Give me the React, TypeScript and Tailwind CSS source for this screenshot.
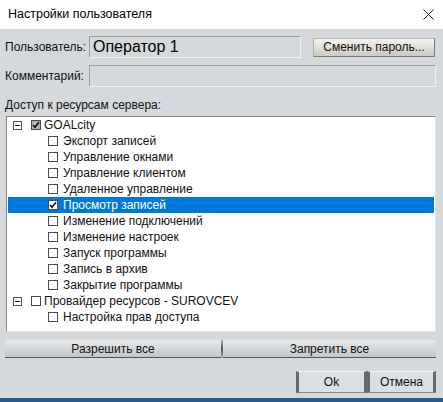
import React from "react";

const font = { fontFamily: '"Liberation Sans", Arial, sans-serif' };

function Box({ checked, gray }: { checked?: boolean; gray?: boolean }) {
  return (
    <div
      className={`w-[10px] h-[10px] border border-[#4a4a4a] flex items-center justify-center shrink-0 ${
        gray ? "bg-[#b4b4b4]" : "bg-white"
      }`}
    >
      {checked && (
        <svg width="8" height="8" viewBox="0 0 8 8">
          <path d="M1 4 L3 6.2 L7 1.2" stroke="#111" strokeWidth="1.6" fill="none" />
        </svg>
      )}
    </div>
  );
}

function Expander() {
  return (
    <div className="w-[9px] h-[9px] border border-[#555] bg-white flex items-center justify-center shrink-0">
      <div className="w-[5px] h-[1px] bg-[#222]" />
    </div>
  );
}

type Row = { label: string; level: number; checked?: boolean; gray?: boolean; selected?: boolean };

const rows: Row[] = [
  { label: "GOALcity", level: 0, checked: true, gray: true },
  { label: "Экспорт записей", level: 1 },
  { label: "Управление окнами", level: 1 },
  { label: "Управление клиентом", level: 1 },
  { label: "Удаленное управление", level: 1 },
  { label: "Просмотр записей", level: 1, checked: true, selected: true },
  { label: "Изменение подключений", level: 1 },
  { label: "Изменение настроек", level: 1 },
  { label: "Запуск программы", level: 1 },
  { label: "Запись в архив", level: 1 },
  { label: "Закрытие программы", level: 1 },
  { label: "Провайдер ресурсов - SUROVCEV", level: 0 },
  { label: "Настройка прав доступа", level: 1 },
];

export default function App() {
  return (
    <div className="w-[443px] h-[402px] bg-[#d5d9dc] flex flex-col text-[12px] text-[#111] overflow-hidden" style={font}>
      <div className="h-[29px] bg-white flex items-center justify-between pl-[8px] pr-[9px] shrink-0">
        <span className="text-[12.5px] text-black">Настройки пользователя</span>
        <svg width="11" height="11" viewBox="0 0 11 11">
          <path d="M0.5 0.5 L10.5 10.5 M10.5 0.5 L0.5 10.5" stroke="#222" strokeWidth="1" />
        </svg>
      </div>
      <div className="flex flex-col pl-[5px] pr-[7px] grow">
        <div className="flex items-center mt-[7px] h-[22px]">
          <span className="w-[84px]">Пользователь:</span>
          <div className="w-[212px] h-[22px] border border-[#9a9c9e] border-b-[#eef0f1] border-r-[#eef0f1] flex items-center pl-[3px] text-[16px] text-black">
            Оператор 1
          </div>
          <button className="ml-[12px] w-[122px] h-[19px] border border-[#7b7b76] border-t-[#b8b8b0] border-l-[#b0b0a8] bg-gradient-to-b from-[#f4f3ee] to-[#cbcac2] text-[12px] flex items-center justify-center leading-none">
            Сменить пароль...
          </button>
        </div>
        <div className="flex items-center mt-[7px] h-[22px]">
          <span className="w-[84px]">Комментарий:</span>
          <div className="w-[347px] h-[22px] border border-[#9a9c9e] border-b-[#eef0f1] border-r-[#eef0f1]" />
        </div>
        <div className="mt-[10px] h-[16px] leading-[16px]">Доступ к ресурсам сервера:</div>
        <div className="ml-[1px] mt-[3px] w-[430px] h-[216px] bg-white border border-[#8a8a8a] border-r-[#e4e4e4] border-b-[#e4e4e4] px-[1px]">
          {rows.map((r, i) => (
            <div
              key={i}
              className={`h-[16px] flex items-center ${r.selected ? "bg-[#0078d7] text-white" : ""}`}
            >
              {r.level === 0 ? (
                <>
                  <div className="w-[5px]" />
                  <Expander />
                  <div className="w-[9px]" />
                  <Box checked={r.checked} gray={r.gray} />
                  <span className="ml-[3px]">{r.label}</span>
                </>
              ) : (
                <>
                  <div className="w-[40px]" />
                  <Box checked={r.checked} />
                  <span className="ml-[5px]">{r.label}</span>
                </>
              )}
            </div>
          ))}
        </div>
        <div className="flex mt-[8px] h-[18px]">
          <button className="w-[216px] h-[18px] bg-gradient-to-b from-[#e6e8e9] to-[#c4c8ca] border-b border-[#555] text-[12px] flex items-center justify-center leading-none">
            Разрешить все
          </button>
          <div className="w-[2px] h-[18px] bg-gradient-to-b from-[#aaa] via-[#555] to-[#aaa]" />
          <button className="w-[213px] h-[18px] bg-gradient-to-b from-[#e6e8e9] to-[#c4c8ca] border-b border-[#555] text-[12px] flex items-center justify-center leading-none">
            Запретить все
          </button>
        </div>
        <div className="flex justify-end mt-[13px] h-[22px]">
          <button className="w-[71px] h-[22px] bg-[#dcdfe1] border-x-[3px] border-x-[#6a6a6a] border-t border-t-[#f4f4f4] border-b border-b-[#8a8a8a] text-[12px] flex items-center justify-center leading-none">
            Ok
          </button>
          <button className="w-[69px] h-[22px] bg-[#dcdfe1] border-x-[3px] border-x-[#6a6a6a] border-t border-t-[#f4f4f4] border-b border-b-[#8a8a8a] text-[12px] flex items-center justify-center leading-none">
            Отмена
          </button>
        </div>
      </div>
      <div className="h-[4px] bg-[#2c5a86] shrink-0" />
    </div>
  );
}
